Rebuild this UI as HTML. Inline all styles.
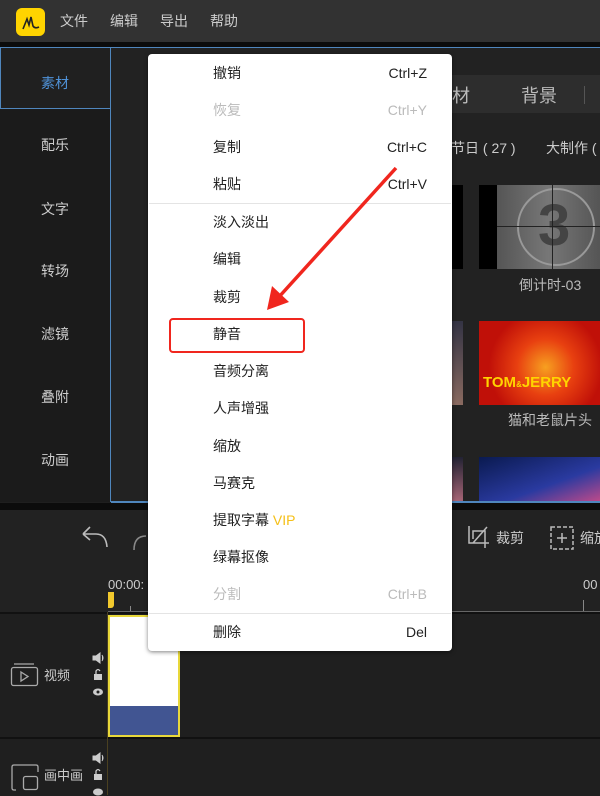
<!DOCTYPE html>
<html><head><meta charset="utf-8"><style>
*{margin:0;padding:0;box-sizing:border-box}
body{width:600px;height:795px;overflow:hidden;background:#1f1f1f;font-family:"Liberation Sans","Noto Sans CJK SC",sans-serif;position:relative}
.a{position:absolute}
.t{position:absolute;white-space:nowrap;font-size:14px;line-height:16px}
.mi{position:absolute;left:213px;font-size:14px;color:#222;white-space:nowrap;line-height:16px}
.sc{position:absolute;right:173px;font-size:14px;color:#222;white-space:nowrap;line-height:16px}
.dis{color:#bbb}
</style></head><body>
<div class="a" style="left:0;top:0;width:600px;height:42px;background:#323232"></div>
<div class="a" style="left:16px;top:8px;width:29px;height:28px;background:#ffd400;border-radius:6px"></div>
<svg class="a" style="left:16px;top:8px" width="29" height="28"><path d="M7 21 L11 11 L13 17 L15 9 L17 18 Q19 21 23 19" stroke="#222" stroke-width="1.6" fill="none"/></svg>
<div class="t" style="left:60px;top:13px;color:#ccc">文件</div>
<div class="t" style="left:110px;top:13px;color:#ccc">编辑</div>
<div class="t" style="left:160px;top:13px;color:#ccc">导出</div>
<div class="t" style="left:210px;top:13px;color:#ccc">帮助</div>
<div class="a" style="left:0;top:42px;width:600px;height:5px;background:#0c0c0c"></div>
<div class="a" style="left:0;top:47px;width:600px;height:1px;background:#4f86bd"></div>
<div class="a" style="left:0;top:48px;width:111px;height:454px;background:#1b1b1b"></div>
<div class="a" style="left:0;top:48px;width:111px;height:61px;background:#202020;border:1px solid #4f86bd;border-top:none"></div>
<div class="a" style="left:110px;top:109px;width:1px;height:393px;background:#4f86bd"></div>
<div class="t" style="left:41px;top:75px;color:#4f92d8">素材</div>
<div class="t" style="left:41px;top:137px;color:#ccc">配乐</div>
<div class="t" style="left:41px;top:201px;color:#ccc">文字</div>
<div class="t" style="left:41px;top:263px;color:#ccc">转场</div>
<div class="t" style="left:41px;top:326px;color:#ccc">滤镜</div>
<div class="t" style="left:41px;top:389px;color:#ccc">叠附</div>
<div class="t" style="left:41px;top:452px;color:#ccc">动画</div>
<div class="a" style="left:111px;top:48px;width:489px;height:454px;background:#222"></div>
<div class="a" style="left:150px;top:75px;width:450px;height:38px;background:#2d2d2d"></div>
<div class="t" style="left:452px;top:86px;color:#bbb;font-size:18px;line-height:20px">材</div>
<div class="t" style="left:521px;top:86px;color:#bbb;font-size:18px;line-height:20px">背景</div>
<div class="a" style="left:584px;top:86px;width:1px;height:18px;background:#555"></div>
<div class="t" style="left:451px;top:140px;color:#ccc">节日 ( 27 )</div>
<div class="t" style="left:546px;top:140px;color:#ccc">大制作 (</div>
<div class="a" style="left:400px;top:185px;width:63px;height:84px;background:#000"></div>
<div class="a" style="left:479px;top:185px;width:121px;height:84px;background:#000"></div>
<div class="a" style="left:497px;top:185px;width:103px;height:84px;background:linear-gradient(90deg,#555,#777 50%,#555)"></div>
<div class="a" style="left:517px;top:188px;width:78px;height:78px;border:2px solid #999;border-radius:50%"></div>
<div class="t" style="left:538px;top:196px;color:#444;font-size:58px;line-height:60px;font-weight:bold">3</div>
<div class="a" style="left:497px;top:226px;width:103px;height:1px;background:#222"></div>
<div class="a" style="left:552px;top:185px;width:1px;height:84px;background:#222"></div>
<div class="t" style="left:519px;top:277px;color:#bbb">倒计时-03</div>
<div class="a" style="left:400px;top:321px;width:63px;height:84px;background:linear-gradient(#334,#8a6a60)"></div>
<div class="a" style="left:479px;top:321px;width:121px;height:84px;background:radial-gradient(circle at 55% 55%,#f7a020 0,#e84010 35%,#c01008 70%)"></div>
<div class="t" style="left:483px;top:375px;color:#ffd400;font-weight:bold;font-size:15px">TOM<span style="font-size:8px">&amp;</span>JERRY</div>
<div class="t" style="left:508px;top:412px;color:#bbb">猫和老鼠片头</div>
<div class="a" style="left:400px;top:457px;width:63px;height:45px;background:linear-gradient(#223,#a67)"></div>
<div class="a" style="left:479px;top:457px;width:121px;height:45px;background:linear-gradient(160deg,#0a1a50,#2a3aa0 60%,#c04a8a)"></div>
<div class="a" style="left:111px;top:501px;width:489px;height:2px;background:#4f86bd"></div>
<div class="a" style="left:0;top:503px;width:600px;height:7px;background:#0c0c0c"></div>
<div class="a" style="left:0;top:510px;width:600px;height:102px;background:#222"></div>
<svg class="a" style="left:80px;top:525px" width="30" height="25"><path d="M3 9 L10 2 M3 9 L10 15 M3 9 H16 Q26 9 27 22" stroke="#bbb" stroke-width="1.6" fill="none"/></svg>
<svg class="a" style="left:132px;top:530px" width="20" height="20"><path d="M2 20 Q2 6 14 6" stroke="#888" stroke-width="1.6" fill="none"/></svg>
<svg class="a" style="left:465px;top:523px" width="28" height="28"><path d="M4 3 V20 H24 M8 16 V8 H20 V25 M8 20 L22 4" stroke="#bbb" stroke-width="1.5" fill="none"/></svg>
<div class="t" style="left:496px;top:530px;color:#ccc">裁剪</div>
<svg class="a" style="left:548px;top:524px" width="28" height="28"><rect x="3" y="3" width="22" height="22" fill="none" stroke="#bbb" stroke-width="1.5" stroke-dasharray="4 2"/><path d="M14 9 V19 M9 14 H19" stroke="#bbb" stroke-width="1.5"/></svg>
<div class="t" style="left:580px;top:530px;color:#ccc">缩放</div>
<div class="t" style="left:108px;top:577px;color:#ccc;font-size:13px">00:00:</div>
<div class="t" style="left:583px;top:577px;color:#ccc;font-size:13px">00</div>
<div class="a" style="left:108px;top:592px;width:6px;height:16px;background:#f2c92d;border-radius:0 0 3px 0"></div>
<div class="a" style="left:108px;top:611px;width:492px;height:1px;background:#666"></div>
<div class="a" style="left:130px;top:606px;width:1px;height:5px;background:#888"></div>
<div class="a" style="left:583px;top:600px;width:1px;height:11px;background:#888"></div>
<div class="a" style="left:0;top:612px;width:600px;height:2px;background:#111"></div>
<div class="a" style="left:0;top:614px;width:600px;height:124px;background:#1f1f1f"></div>
<div class="a" style="left:0;top:737px;width:600px;height:2px;background:#111"></div>
<div class="a" style="left:107px;top:612px;width:1px;height:183px;background:#4a4020"></div>
<svg class="a" style="left:10px;top:662px" width="30" height="26"><path d="M4 2 H24" stroke="#aaa" stroke-width="1.2"/><rect x="1.5" y="5.5" width="26" height="18" rx="2" fill="none" stroke="#aaa" stroke-width="1.3"/><path d="M11 10 L18 14.5 L11 19 Z" fill="none" stroke="#aaa" stroke-width="1.3"/></svg>
<div class="t" style="left:44px;top:668px;color:#ccc;font-size:13px">视频</div>
<svg class="a" style="left:92px;top:652px" width="14" height="44"><path d="M1 4 H4 L8 1 V11 L4 8 H1 Z M10 3 Q12 6 10 9" fill="#ccc" stroke="#ccc" stroke-width="1"/><rect x="2" y="22" width="8" height="6" fill="#ccc"/><path d="M4 22 V19 Q6 16 8 19" stroke="#ccc" stroke-width="1.3" fill="none"/><ellipse cx="6" cy="40" rx="5" ry="3.5" fill="#ccc"/><circle cx="6" cy="40" r="1.5" fill="#1f1f1f"/></svg>
<svg class="a" style="left:10px;top:762px" width="30" height="33"><path d="M6 28 H4 Q2 28 2 26 V5 Q2 3 4 3 H26 Q28 3 28 5 V10" stroke="#aaa" stroke-width="1.3" fill="none"/><rect x="13.5" y="14.5" width="14" height="13" rx="2" fill="none" stroke="#aaa" stroke-width="1.3"/></svg>
<div class="t" style="left:44px;top:768px;color:#ccc;font-size:13px">画中画</div>
<svg class="a" style="left:92px;top:752px" width="14" height="44"><path d="M1 4 H4 L8 1 V11 L4 8 H1 Z M10 3 Q12 6 10 9" fill="#ccc" stroke="#ccc" stroke-width="1"/><rect x="2" y="22" width="8" height="6" fill="#ccc"/><path d="M4 22 V19 Q6 16 8 19" stroke="#ccc" stroke-width="1.3" fill="none"/><ellipse cx="6" cy="40" rx="5" ry="3.5" fill="#ccc"/></svg>
<div class="a" style="left:108px;top:615px;width:72px;height:122px;border:2px solid #e8d83a;background:#fff"></div>
<div class="a" style="left:110px;top:706px;width:68px;height:29px;background:#415592"></div>
<div class="a" style="left:148px;top:54px;width:304px;height:597px;background:#fff;border-radius:4px;box-shadow:0 1px 4px rgba(0,0,0,.5)"></div>
<div class="mi" style="top:65px">撤销</div><div class="sc" style="top:65px">Ctrl+Z</div>
<div class="mi dis" style="top:102px">恢复</div><div class="sc dis" style="top:102px">Ctrl+Y</div>
<div class="mi" style="top:139px">复制</div><div class="sc" style="top:139px">Ctrl+C</div>
<div class="mi" style="top:176px">粘贴</div><div class="sc" style="top:176px">Ctrl+V</div>
<div class="a" style="left:149px;top:203px;width:302px;height:1px;background:#e4e4e4"></div>
<div class="mi" style="top:214px">淡入淡出</div>
<div class="mi" style="top:251px">编辑</div>
<div class="mi" style="top:289px">裁剪</div>
<div class="mi" style="top:326px">静音</div>
<div class="mi" style="top:363px">音频分离</div>
<div class="mi" style="top:400px">人声增强</div>
<div class="mi" style="top:438px">缩放</div>
<div class="mi" style="top:475px">马赛克</div>
<div class="mi" style="top:512px">提取字幕 <span style="color:#f5c018">VIP</span></div>
<div class="mi" style="top:549px">绿幕抠像</div>
<div class="mi dis" style="top:586px">分割</div><div class="sc dis" style="top:586px">Ctrl+B</div>
<div class="a" style="left:149px;top:613px;width:302px;height:1px;background:#e4e4e4"></div>
<div class="mi" style="top:624px">删除</div><div class="sc" style="top:624px">Del</div>
<div class="a" style="left:169px;top:318px;width:136px;height:35px;border:2.5px solid #f0261e;border-radius:4px"></div>
<svg class="a" style="left:0;top:0" width="600" height="795"><path d="M396 168 L278 298" stroke="#f0261e" stroke-width="3.5"/><path d="M267 310 L272 286 L289 302 Z" fill="#f0261e"/></svg>
</body></html>
